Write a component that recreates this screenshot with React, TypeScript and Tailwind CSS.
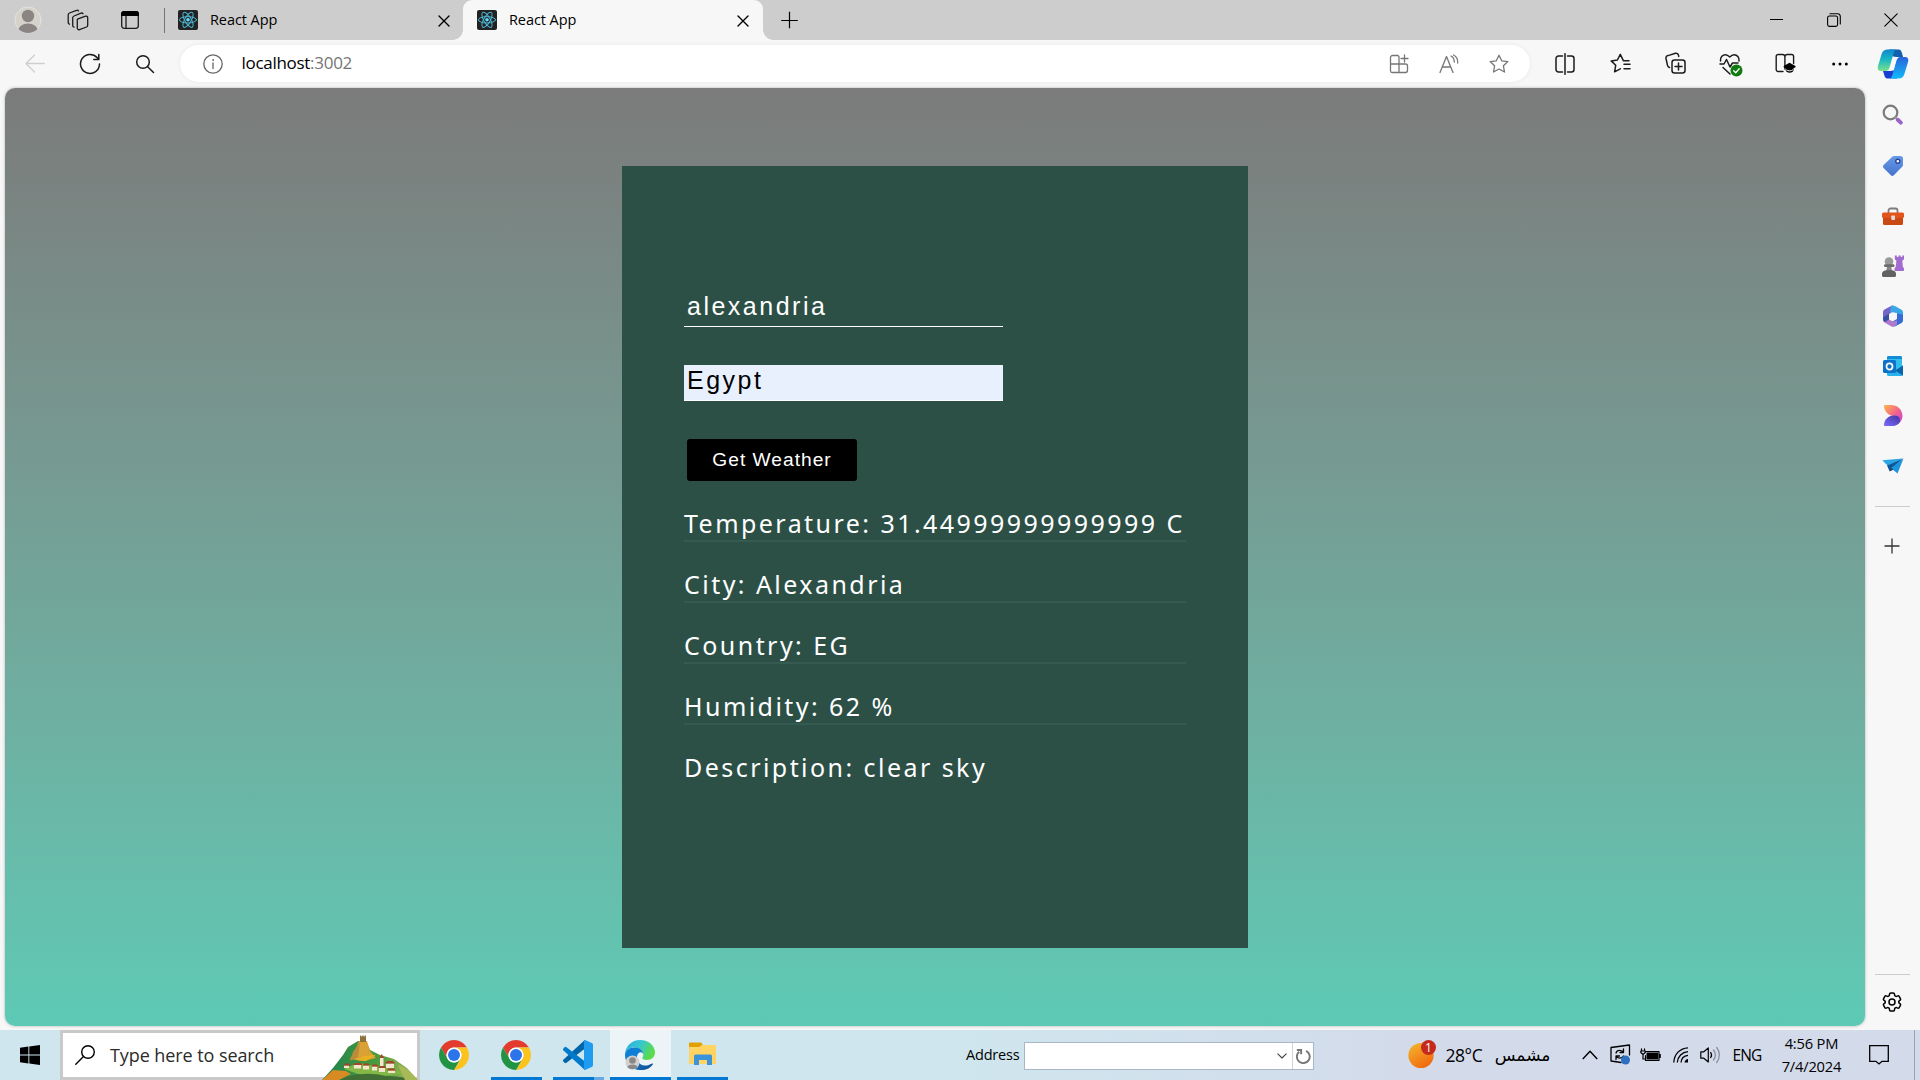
import React from "react";
import { HiOutlineCog6Tooth } from "react-icons/hi2";

type Box = { w?: number; h?: number; vb: string; className?: string; children: React.ReactNode };

function Svg({ w = 20, h = 20, vb, className = "", children }: Box) {
  return (
    <svg
      width={w}
      height={h}
      viewBox={vb}
      className={`shrink-0 ${className}`}
      fill="none"
      stroke="currentColor"
      strokeWidth={1.3}
      strokeLinecap="round"
      strokeLinejoin="round"
    >
      {children}
    </svg>
  );
}

function Slot({ className = "", children }: { className?: string; children: React.ReactNode }) {
  return <div className={`flex w-8 shrink-0 items-center justify-center ${className}`}>{children}</div>;
}

function ReactFavicon() {
  return (
    <Svg vb="0 0 20 20">
      <rect width="20" height="20" rx="2" fill="#222222" stroke="none" />
      <g stroke="#4cb5d3" strokeWidth="1">
        <ellipse cx="10" cy="9.8" rx="8.6" ry="3.2" />
        <ellipse cx="10" cy="9.8" rx="8.6" ry="3.2" transform="rotate(60 10 9.8)" />
        <ellipse cx="10" cy="9.8" rx="8.6" ry="3.2" transform="rotate(120 10 9.8)" />
      </g>
      <circle cx="10" cy="9.8" r="1.8" fill="#61dafb" stroke="none" />
    </Svg>
  );
}

function CloseGlyph() {
  return (
    <Svg w={12} h={12} vb="0 0 12 12" className="text-black">
      <path d="M1 1l10 10M11 1L1 11" strokeWidth="1.4" />
    </Svg>
  );
}

function TitleBar() {
  return (
    <div className="flex h-10 shrink-0 items-center bg-[#cdcdcd]">
      <Slot className="ml-3">
        <Svg w={28} h={28} vb="0 0 28 28">
          <defs>
            <clipPath id="avatar">
              <circle cx="14" cy="14" r="13" />
            </clipPath>
          </defs>
          <circle cx="14" cy="14" r="13" fill="#d5d1cb" stroke="#e6e3df" strokeWidth="1" />
          <g clipPath="url(#avatar)" fill="#8a8582" stroke="none">
            <circle cx="14" cy="10" r="6.2" />
            <ellipse cx="14" cy="25" rx="10" ry="7.4" />
          </g>
        </Svg>
      </Slot>
      <Slot className="ml-[18px]">
        <Svg w={22} h={22} vb="0 0 22 22" className="text-[#1b1b1b]">
          <path d="M10.500 10.200l8-3a1.600 1.600 0 0 1 2.200 1.500v7.600a1.800 1.800 0 0 1-1.200 1.700l-7 2.600a1.600 1.600 0 0 1-2.200-1.500v-7.200a1.800 1.800 0 0 1 .2-1.700z" />
          <path d="M16 4.800a1.500 1.500 0 0 0-2-.6L7 7a2 2 0 0 0-1.300 1.800v7.600a1.700 1.700 0 0 0 1.300 1.700M11.500 2a1.500 1.500 0 0 0-2-.6L2.500 4a2 2 0 0 0-1.300 1.800v7.600a1.700 1.700 0 0 0 1.300 1.700" />
        </Svg>
      </Slot>
      <Slot className="ml-5">
        <Svg w={20} h={20} vb="0 0 20 20" className="text-[#1b1b1b]">
          <rect x="1.700" y="1.700" width="16.600" height="16.600" rx="2.500" />
          <path d="M1 6V4a3 3 0 0 1 3-3h12a3 3 0 0 1 3 3v2z" fill="#000" stroke="none" />
          <path d="M6 6v12" />
        </Svg>
      </Slot>
      <div className="ml-[18px] h-[25px] w-px bg-[#757575]" />
      <div className="ml-[13px] flex h-10 w-[285px] items-center">
        <ReactFavicon />
        <span className="ml-3 text-[14.500px] leading-5 tracking-[-0.080px] text-black">React App</span>
        <div className="ml-auto mr-[13px] mt-px">
          <CloseGlyph />
        </div>
      </div>
      <div className="relative flex h-10 w-[300px] shrink-0 items-center rounded-t-[9px] bg-[#f7f7f7] pl-[14px]">
        <div className="absolute -left-[10px] bottom-0 size-[10px] bg-[radial-gradient(circle_at_top_left,transparent_9.500px,#f7f7f7_10px)]" />
        <div className="absolute -right-[10px] bottom-0 size-[10px] bg-[radial-gradient(circle_at_top_right,transparent_9.500px,#f7f7f7_10px)]" />
        <ReactFavicon />
        <span className="ml-3 text-[14.500px] leading-5 tracking-[-0.080px] text-black">React App</span>
        <div className="ml-auto mr-[14px] mt-px">
          <CloseGlyph />
        </div>
      </div>
      <Slot className="ml-[10px]">
        <Svg w={18} h={18} vb="0 0 18 18" className="text-black">
          <path d="M9.500.7v16.600M1.200 9.500h16.600" strokeWidth="1.200" strokeLinecap="butt" />
        </Svg>
      </Slot>
      <Slot className="ml-auto">
        <div className="-mt-px h-px w-[13px] bg-black" />
      </Slot>
      <Slot className="ml-[26px]">
        <Svg w={14} h={14} vb="0 0 14 14" className="text-black">
          <rect x=".600" y="3" width="10" height="10.400" rx="1.800" strokeWidth="1.100" />
          <path d="M3 .7h7.500a2.800 2.800 0 0 1 2.800 2.800V11" strokeWidth="1.100" />
        </Svg>
      </Slot>
      <Slot className="mr-[13px] ml-[25px]">
        <Svg w={14} h={14} vb="0 0 14 14" className="text-black">
          <path d="M.8.8l12.400 12.400M13.200.8L.8 13.200" strokeWidth="1.100" />
        </Svg>
      </Slot>
    </div>
  );
}

function Copilot() {
  return (
    <Svg w={32} h={30} vb="0 0 32 30">
      <defs>
        <linearGradient id="cpA" x1="0" y1="0" x2="0" y2="1">
          <stop offset="0" stopColor="#0f86cf" />
          <stop offset=".45" stopColor="#17b6c3" />
          <stop offset="1" stopColor="#7ce08c" />
        </linearGradient>
        <linearGradient id="cpB" x1="0" y1="0" x2="0" y2="1">
          <stop offset="0" stopColor="#2b63d9" />
          <stop offset="1" stopColor="#12b9fb" />
        </linearGradient>
      </defs>
      <g stroke="none">
        <path d="M12 .5h9.500c2.300 0 3 1.800 3.600 4l.9 3.500h-7L14 7z" fill="#115fae" />
        <path d="M20 29.500h-9.500c-2.300 0-2.800-1.800-3.400-4L6 22h8l4-1z" fill="#173fd0" />
        <path d="M10.500.5h9c-2 .4-2.600 2.500-3.300 5l-3.400 12c-.8 3-1.600 4.500-4.300 4.500H4c-3 0-3.800-2.200-3-5L4.600 5C5.500 2 7.500.5 10.500.5z" fill="url(#cpA)" />
        <path d="M21.500 29.500h-9c2-.4 2.600-2.500 3.300-5l3.400-12c.8-3 1.600-4.500 4.300-4.500H28c3 0 3.800 2.200 3 5l-3.600 12c-.9 3-2.900 4.500-5.900 4.500z" fill="url(#cpB)" />
        <path d="M18.300 8.500h3c-1.500 1-2 2.500-2.600 4.500l-2.200 8h-3.200c.9-1 1.300-2.500 1.800-4.500l1.200-4.500c.5-2 1-2.800 2-3.500z" fill="#f7fbff" />
      </g>
    </Svg>
  );
}

function ToolBar() {
  return (
    <div className="flex h-12 shrink-0 items-center bg-[#f7f7f7] pb-px text-[#1b1b1b]">
      <Slot className="ml-[19px] text-[#cfcfcf]">
        <Svg vb="0 0 20 20">
          <path d="M19.300 9.500H1M9.500 1L1 9.500 9.500 18" />
        </Svg>
      </Slot>
      <Slot className="ml-[23px]">
        <Svg w={22} h={22} vb="0 0 22 22">
          <path d="M20.500 11A9.500 9.500 0 1 1 18 4.500L19.800 6.500M19.800 1.500v5h-5" strokeWidth="1.500" />
        </Svg>
      </Slot>
      <Slot className="ml-[23px]">
        <Svg vb="0 0 20 20">
          <circle cx="8" cy="8" r="6.300" strokeWidth="1.500" />
          <path d="M12.700 12.700l5.800 5.800" strokeWidth="1.500" />
        </Svg>
      </Slot>
      <div className="ml-[19px] flex h-[37px] w-[1350px] shrink-0 items-center rounded-full bg-white pl-4 pr-[15px] text-[#767676] shadow-[0_0_4px_rgba(0,0,0,0.07)]">
        <Slot>
          <Svg vb="0 0 20 20" className="ml-px text-[#666666]">
            <circle cx="10" cy="10" r="9.200" />
            <path d="M10 9v5.500" />
            <circle cx="10" cy="6" r=".5" fill="currentColor" strokeWidth=".8" />
          </Svg>
        </Slot>
        <span className="-mt-px ml-[13.500px] text-[17px] leading-6 tracking-[-0.290px]">
          <span className="text-black">localhost</span>:3002
        </span>
        <Slot className="ml-auto">
          <Svg vb="0 0 20 20">
            <path d="M9 1.500H3.500a2 2 0 0 0-2 2V17a1.500 1.500 0 0 0 1.500 1.500h13.500a2 2 0 0 0 2-2V12a2 2 0 0 0-2-2h-15M10 18.500V3a1.500 1.500 0 0 0-1.500-1.500M15.500 1v7M12 4.500h7" />
          </Svg>
        </Slot>
        <Slot className="ml-[18px]">
          <Svg vb="0 0 20 20">
            <path d="M1 18.500L7.500 2.500 14 18.500M3.300 13h8.400M12 2c2 1 3.300 3 3.300 6M14.500 1c2.800 1.500 4.500 4.500 4.200 8" />
          </Svg>
        </Slot>
        <Slot className="ml-[18px]">
          <Svg vb="0 0 20 20">
            <path d="M10 1.200l2.700 5.600 6.200.8-4.500 4.200 1.100 6.200L10 15l-5.500 3 1.100-6.200L1.100 7.600l6.200-.8z" />
          </Svg>
        </Slot>
      </div>
      <Slot className="ml-[19px]">
        <Svg w={20} h={22} vb="0 0 20 22">
          <path d="M7.500 3H3.500a2.500 2.500 0 0 0-2.500 2.500v11A2.500 2.500 0 0 0 3.500 19h4M12.500 3h4A2.500 2.500 0 0 1 19 5.500v11a2.500 2.500 0 0 1-2.500 2.500h-4M10 .7v20.600" strokeWidth="1.500" />
        </Svg>
      </Slot>
      <Slot className="ml-[23px]">
        <Svg w={21} h={21} vb="0 0 21 21">
          <path d="M19 7.800h-5.500L10.300 1.300 7.400 7l-6.200.9 4.500 4.400-1.100 6.500 5.700-3M14 11.300h6M14 15.800h6" strokeWidth="1.500" />
        </Svg>
      </Slot>
      <Slot className="ml-[23px]">
        <Svg w={21} h={22} vb="0 0 21 22" className="-mt-px">
          <rect x="7" y="8" width="13" height="13" rx="2.500" strokeWidth="1.500" />
          <path d="M13.500 11v7M10 14.500h7M4.500 15.500a3 3 0 0 1-2-2.200L1 6.500A2.500 2.500 0 0 1 3 3.600l7.500-2.300a2.500 2.500 0 0 1 3 1.900l.2 1.300" strokeWidth="1.500" />
        </Svg>
      </Slot>
      <Slot className="ml-6">
        <Svg w={24} h={24} vb="0 0 24 24" className="mt-[3px]">
          <path d="M1.500 8c-.5-4 2.500-6.300 5-6.300 2 0 3 1 4.300 2.300 1.200-1.300 2.300-2.300 4.300-2.300 3 0 5.400 2.800 4.900 6.300M1 11h4l2.500-4.500L11 14l2.500-4H19M4 14.500l7 6.500" strokeWidth="1.500" />
          <circle cx="17.500" cy="17.500" r="6" fill="#0f7b10" stroke="none" />
          <path d="M14.700 17.700l2 2 3.500-4" stroke="#fff" />
        </Svg>
      </Slot>
      <Slot className="ml-[22px]">
        <Svg w={21} h={21} vb="0 0 21 21">
          <path d="M8 18.500H3.200a2 2 0 0 1-2-2v-13a2 2 0 0 1 2-2h4.500a2.200 2.200 0 0 1 2.200 2.200V16M9.900 3.700a2.200 2.200 0 0 1 2.200-2.200h4.500a2 2 0 0 1 2 2v7" strokeWidth="1.400" />
          <path d="M14.500 9.700l6 3.400v1.200l-2 1v2.200c-1 3-6.500 3-7.800 0v-2.200l-2-1v-1.200z" fill="#000" stroke="none" />
          <path d="M11.500 17c1.800 1.200 4.500 1.200 6.200 0" stroke="#f7f7f7" strokeWidth="1" />
        </Svg>
      </Slot>
      <Slot className="ml-[23px]">
        <Svg w={16} h={4} vb="0 0 16 4">
          <g fill="#000" stroke="none">
            <circle cx="1.700" cy="2" r="1.500" />
            <circle cx="8" cy="2" r="1.500" />
            <circle cx="14.300" cy="2" r="1.500" />
          </g>
        </Svg>
      </Slot>
      <Slot className="ml-[21px]">
        <Copilot />
      </Slot>
    </div>
  );
}

function WeatherPage() {
  return (
    <main className="ml-[5px] flex h-[938px] w-[1860px] shrink-0 items-start justify-center overflow-hidden rounded-[10px] bg-gradient-to-b from-[#7b7b7b] to-[#5dcab5] pt-[78px] shadow-[0_0_3px_rgba(0,0,0,0.3)]">
      <section className="flex h-[782px] w-[626px] flex-col items-start bg-[#2c5046] px-[62px] pt-[125px] text-[25px] tracking-[0.1em] text-white">
        <input
          defaultValue="alexandria"
          className="block h-9 w-[319px] border-b border-white bg-transparent px-[3px] pb-[5px] pt-px font-['Liberation_Sans',sans-serif] leading-[29px] tracking-[0.1em] outline-none"
        />
        <input
          defaultValue="Egypt"
          className="mt-[38px] block h-9 w-[319px] border-b border-white bg-[#e8f0fe] px-[3px] pb-[5px] pt-px font-['Liberation_Sans',sans-serif] leading-[29px] tracking-[0.1em] text-black outline-none"
        />
        <button className="ml-[3px] mt-[38px] h-[42px] w-[170px] rounded-[3px] bg-black text-center font-['Liberation_Sans',sans-serif] text-[19.200px] leading-[22px] tracking-[1px] whitespace-nowrap">
          Get Weather
        </button>
        <div className="mt-[25px] flex w-full flex-col gap-[25px] font-['Noto_Sans',sans-serif] leading-[34px] tracking-[2.450px] whitespace-nowrap">
          <p className="border-b-2 border-[#355b50]">Temperature: 31.44999999999999 C</p>
          <p className="border-b-2 border-[#355b50]">City: Alexandria</p>
          <p className="border-b-2 border-[#355b50]">Country: EG</p>
          <p className="border-b-2 border-[#355b50]">Humidity: 62 %</p>
          <p>Description: clear sky</p>
        </div>
      </section>
    </main>
  );
}

function SideBar() {
  return (
    <aside className="flex w-[55px] shrink-0 flex-col items-center">
      <div className="flex flex-col items-center pt-px">
        <div className="flex h-[51px] items-center justify-center">
          <Svg w={22} h={22} vb="0 0 22 22">
            <circle cx="8.500" cy="8.500" r="6.800" stroke="#7b7b7b" strokeWidth="2.200" />
            <path d="M13.500 13.500l2 2" stroke="#999" strokeWidth="2" />
            <path d="M15.800 15.800l3 2.800" stroke="#9b62c9" strokeWidth="4" />
          </Svg>
        </div>
        <div className="flex h-[51px] items-center justify-center">
          <Svg w={22} h={22} vb="0 0 22 22">
            <defs>
              <linearGradient id="tag" x1="0" y1="0" x2="0" y2="1">
                <stop offset="0" stopColor="#669be8" />
                <stop offset="1" stopColor="#4672cd" />
              </linearGradient>
            </defs>
            <path d="M12 1h6.500A2.500 2.500 0 0 1 21 3.500V10a2 2 0 0 1-.6 1.500l-8.600 8.700a2 2 0 0 1-2.900 0L1.600 13a2 2 0 0 1 0-2.900l8.900-8.500A2 2 0 0 1 12 1z" fill="url(#tag)" stroke="none" />
            <circle cx="15.800" cy="6.300" r="2" fill="#fff" stroke="#28449b" strokeWidth="1.400" />
          </Svg>
        </div>
        <div className="flex h-[51px] items-center justify-center">
          <Svg w={22} h={20} vb="0 0 22 20">
            <path d="M6.500 6V3.500a2 2 0 0 1 2-2h5a2 2 0 0 1 2 2V6" stroke="#7c7c7c" strokeWidth="1.800" />
            <rect x="1" y="9" width="20" height="9" rx="1.500" fill="#c94813" stroke="none" />
            <rect x="0" y="5.500" width="22" height="5.500" rx="1.500" fill="#e2541c" stroke="none" />
            <rect x="9.300" y="8.500" width="3.700" height="4.500" rx=".8" fill="#ddd" stroke="none" />
          </Svg>
        </div>
        <div className="flex h-[49px] items-center justify-center">
          <Svg w={22} h={22} vb="0 0 22 22" className="-mt-px">
            <g stroke="none">
              <circle cx="7" cy="6.500" r="4.300" fill="#9a9a9a" />
              <rect x="2" y="9.300" width="10.500" height="2.700" rx="1.300" fill="#6c6c6c" />
              <path d="M5 12h4.300l.7 4H4.300z" fill="#858585" />
              <path d="M0 20.500v-2c0-1.500 1.500-3 4-3.300h6.300c2.200.3 3.700 1.800 3.700 3.300v2c0 .9-.6 1.500-1.500 1.500h-11C.6 22 0 21.400 0 20.500z" fill="#626262" />
              <path d="M12.800.5h2V2h1.700V.5h2.200V2h1.500V.5H22v3.700l-1.700 1.600.5 5.700 1.200 2V15c0 .6-.4 1-1 1h-7.500c-.6 0-1-.4-1-1v-1.500l1.300-2 .6-5.700-1.600-1.600z" fill="#a16bd0" />
            </g>
          </Svg>
        </div>
        <div className="flex h-[50px] items-center justify-center">
          <Svg w={20} h={22} vb="0 0 20 22">
            <g stroke="none">
              <path d="M9.500.3L1.500 4.500A3 3 0 0 0 0 7v9l6-1.500V9l6-3z" fill="#7665c8" />
              <path d="M8 1a4 4 0 0 1 4 0l6.500 3.800A3 3 0 0 1 20 7.300V13l-6-2V8L7 7.500 8 2z" fill="#39a6e8" />
              <path d="M20 9.500v6a3 3 0 0 1-1.500 2.500L12 21.500 8.500 17l5.500-3V8.500z" fill="#356bd3" />
              <path d="M0 13.500l6-2.500v3.500l4 2 4-1v3.800L11.500 21.500a3 3 0 0 1-3 0L1.500 17.500A3 3 0 0 1 0 15z" fill="#b179ce" />
              <path d="M0 12.500l6-4v6L2 17c-1.200-.5-2-2-2-4.500z" fill="#3551a2" />
              <path d="M8.300 7.500h3.400L14 11l-2.300 3.500H8.300L6 11z" fill="#f7f7f7" />
            </g>
          </Svg>
        </div>
        <div className="flex h-[50px] items-center justify-center">
          <Svg w={20} h={20} vb="0 0 20 20">
            <g stroke="none">
              <rect x="4" width="15" height="18" rx="1.500" fill="#32bdef" />
              <path d="M4 3V1.500A1.500 1.500 0 0 1 5.500 0h12A1.500 1.500 0 0 1 19 1.500V3z" fill="#138bd5" />
              <path d="M20 9v9.500a1.500 1.500 0 0 1-1.500 1.500h-13A1.500 1.500 0 0 1 4 18.500V15h10z" fill="#29b1ec" />
              <path d="M20 9.500v10L12 14.500z" fill="#0a64aa" />
              <rect y="4" width="13" height="13" rx="1.500" fill="#0c72c9" />
            </g>
            <ellipse cx="6.500" cy="10.500" rx="3" ry="3.200" stroke="#fff" strokeWidth="1.700" />
          </Svg>
        </div>
        <div className="flex h-[50px] items-center justify-center">
          <Svg w={20} h={21} vb="0 0 20 21" className="-mt-px">
            <defs>
              <linearGradient id="dsA" x1="0" y1="0" x2="1" y2="1">
                <stop offset="0" stopColor="#ffb64b" />
                <stop offset=".5" stopColor="#f26489" />
                <stop offset="1" stopColor="#bc38f0" />
              </linearGradient>
              <linearGradient id="dsB" x1="1" y1="0" x2="0" y2="1">
                <stop offset="0" stopColor="#41359e" />
                <stop offset="1" stopColor="#7a6cff" />
              </linearGradient>
            </defs>
            <g stroke="none">
              <path d="M1 1c0-.6.400-1 1-1h6c6 0 11 4 11.500 10.500C19.500 17 14 21 8 21l3-10C5 10.500 1 6 1 1z" fill="url(#dsA)" />
              <path d="M1 20c0-5 4-9.500 10-9.500 4 0 6 1.500 6 4.500 0 4-4 6-9 6H2c-.6 0-1-.4-1-1z" fill="url(#dsB)" />
            </g>
          </Svg>
        </div>
        <div className="flex h-[50px] items-center justify-center">
          <Svg w={22} h={16} vb="0 0 22 16">
            <g stroke="none">
              <path d="M.3 2.300L21 .5 5.500 7.500z" fill="#2aa5e7" />
              <path d="M5 7.500L21 .5 7.500 13z" fill="#0b5798" />
              <path d="M21.500.5L15.500 15.500 9 10z" fill="#1c95dd" />
              <path d="M9 10l2.500 1.700L7.200 13.500z" fill="#1e3b66" />
            </g>
          </Svg>
        </div>
      </div>
      <div className="mt-[15px] h-px w-[35px] bg-[#cccccc]" />
      <Svg w={16} h={16} vb="0 0 16 16" className="mr-px mt-[31px] text-[#333333]">
        <path d="M8 .5v15M.5 8h15" strokeLinecap="butt" />
      </Svg>
      <div className="mt-auto h-px w-[35px] bg-[#cccccc]" />
      <HiOutlineCog6Tooth className="mb-[16px] mr-px mt-[15px] size-6 text-black" />
    </aside>
  );
}

function Chrome() {
  return (
    <Svg w={30} h={30} vb="0 0 30 30">
      <g stroke="none">
        <path d="M2.010 7.500A15 15 0 0 1 27.990 7.500H15a7.500 7.500 0 0 0-6.500 11.250z" fill="#e33b2e" />
        <path d="M27.990 7.500A15 15 0 0 1 15 30l6.500-11.250A7.500 7.500 0 0 0 15 7.500z" fill="#fcc31e" />
        <path d="M15 30A15 15 0 0 1 2.010 7.500L8.500 18.750a7.500 7.500 0 0 0 13 0z" fill="#229342" />
        <circle cx="15" cy="15" r="7.500" fill="#fff" />
        <circle cx="15" cy="15" r="6" fill="#2b74ea" />
      </g>
    </Svg>
  );
}

function SearchHighlight() {
  return (
    <Svg w={96} h={45} vb="0 0 96 45">
      <defs>
        <linearGradient id="hill" x1="0" y1="0" x2="1" y2="0">
          <stop offset="0" stopColor="#1c8050" />
          <stop offset=".6" stopColor="#4d9c3c" />
          <stop offset="1" stopColor="#b6bd62" />
        </linearGradient>
      </defs>
      <g stroke="none">
        <path d="M0 45l11-12 10-13 5-8 10-6h8l4 9 10 5 14 4 13 9 11 12z" fill="url(#hill)" />
        <path d="M37 6h8l3 10 6 7-12 3-14-2 5-8z" fill="#d9a034" />
        <path d="M38 7l-2 15-8 4 3-9z" fill="#b98c3a" />
        <path d="M33 25l9-4 12-1-10 6z" fill="#e9b122" />
        <path d="M38 .5h1.200v1h1V.5h1.500v1h1V.5H44v6.500h-6z" fill="#8f6f3c" />
        <path d="M22 34q14-8 26-4l22 4 12 4-20 3-26-2z" fill="#82b845" />
        <path d="M0 45l11-10 13 1 5 3-12 6z" fill="#d78b22" />
        <path d="M24 42q20-6 40-1 14 0 31 4H18z" fill="#416e34" />
        <path d="M76 30q8 2 20 15H83z" fill="#a8b957" />
        <path
          d="M22 30.500h5v2.500h-5zM32 30h7v3.500h-7zM41 30.500h6v4h-6zM50 31.500h5v4h-5zM58 23h3.500v9H58zM64 28.500h8V33h-8zM57 33h6v4h-6zM66 35.500h7V38h-7z"
          fill="#f4e6cf"
        />
        <path
          d="M21 30.500l2-2h4.500l1 2zM31 30l2-2h6l1.500 2zM40.500 30.500l1.500-2h4.500l1.500 2zM49.500 31.500l1-2h4.500l1.500 2zM57.500 23l2.200-4 2.300 4zM63 28.500l2-2.500h6l2 2.500zM56 33l2-2h5l1 2zM65 35.500l1-2h6l2 2z"
          fill="#a5432b"
        />
      </g>
    </Svg>
  );
}

function TaskBar() {
  return (
    <footer className="flex h-[50px] w-full shrink-0 items-center bg-gradient-to-r from-[#cfe6ee] from-50% to-[#d3daea] to-75% text-black">
      <div className="flex w-[60px] shrink-0 justify-center">
        <Svg w={20} h={20} vb="0 0 20 20">
          <path d="M0 2.700L8.400 1.500v8H0zM9.300 1.400L20 0v9.500H9.300zM0 10.400h8.400v8.100L0 17.300zM9.300 10.400H20V20L9.300 18.600z" fill="#000" stroke="none" />
        </Svg>
      </div>
      <div className="flex h-[50px] w-[360px] shrink-0 items-center border-[3px] border-[#c9c9c9] bg-white pl-[12px]">
        <Svg vb="0 0 20 20">
          <circle cx="13" cy="7" r="6.300" strokeWidth="1.400" />
          <path d="M8.500 11.500L.8 19.200" strokeWidth="1.400" />
        </Svg>
        <span className="-mt-px ml-[15px] text-[18px] leading-6 tracking-[-0.080px] text-[#2b2b2b]">Type here to search</span>
        <div className="-mr-px -mb-[3px] ml-auto self-end">
          <SearchHighlight />
        </div>
      </div>
      <div className="ml-[19px] flex h-[50px] items-center">
        <Chrome />
      </div>
      <div className="ml-[22px] flex h-[50px] w-[51px] items-center justify-center border-b-[3px] border-[#0078d4] pt-[3px] pr-px">
        <Chrome />
      </div>
      <div className="ml-[11px] flex h-[50px] w-[51px] flex-col items-center">
        <div className="flex h-[47px] items-center pt-[3px] pr-px">
          <Svg w={30} h={30} vb="0 0 30 30">
            <g stroke="none">
              <path d="M22 8.500L3.500 22.700a1.500 1.500 0 0 1-2 0L.5 21.500a1.300 1.300 0 0 1 0-2L21 .8 22 0z" fill="#0065a9" />
              <path d="M22 21.500L3.500 7.300a1.500 1.500 0 0 0-2 0L.5 8.500a1.300 1.300 0 0 0 0 2L21 29.200 22 30z" fill="#007acc" />
              <path d="M22 0l6.800 3A2 2 0 0 1 30 4.800v20.400a2 2 0 0 1-1.200 1.800L22 30c-.8 0-1-.3-1-1V1c0-.7.200-1 1-1z" fill="#1f9cf0" />
            </g>
          </Svg>
        </div>
        <div className="flex h-[3px] w-full">
          <div className="w-[41px] bg-[#0078d4]" />
          <div className="w-[10px] bg-[#66a9e4]" />
        </div>
      </div>
      <div className="ml-[6px] flex h-[50px] w-[61px] items-center justify-center border-b-[3px] border-[#0078d4] bg-[#ecf4f8] pt-[3px] pr-px">
        <Svg w={30} h={30} vb="0 0 30 30">
          <defs>
            <linearGradient id="edA" x1="0" y1="0" x2="1" y2=".4">
              <stop offset="0" stopColor="#2cacdc" />
              <stop offset=".5" stopColor="#35c6d4" />
              <stop offset="1" stopColor="#5bdc49" />
            </linearGradient>
            <linearGradient id="edB" x1="0" y1="0" x2="1" y2="1">
              <stop offset="0" stopColor="#1583d8" />
              <stop offset="1" stopColor="#114a8b" />
            </linearGradient>
          </defs>
          <g stroke="none">
            <path d="M0 14C.5 6 7 0 15 0c9 0 15 6 15 12.500 0 4.500-3.500 7.500-8 7.500-3 0-4.700-.8-4.700-1.700 0-.8 1-1.500 1-3.500C18.300 11 14 7.500 9 7.500c-4.500 0-8 2.500-9 6.500z" fill="url(#edA)" />
            <path d="M0 15c0-4 4-7.500 9.500-7.500 5.500 0 8.800 3.500 8.800 7 0-1.800-2-3-3.800-2-2 1.200-2.700 3-2.700 5C11.800 24 18 27 24 26c-2 2.500-5.500 4-9 4C6 30 0 23 0 15z" fill="#0f7fd5" />
            <path d="M12.500 14.500C10 20.500 15 26.500 22 25.500c2.500-.4 4.500-2 5.500-2 .7 0 .6.500.1 1.200C25 28.500 20 30.500 14.500 30 8.500 27.500 8 19 12.500 14.500z" fill="url(#edB)" />
            <circle cx="7.500" cy="22.500" r="7" fill="#d2d0ce" />
            <circle cx="7.500" cy="20.500" r="3.300" fill="#8a8886" />
            <path d="M2.300 27c1-3.500 9.400-3.500 10.400 0-2.500 3-7.900 3-10.400 0z" fill="#8a8886" />
          </g>
        </Svg>
      </div>
      <div className="ml-[6px] flex h-[50px] w-[51px] items-center justify-center border-b-[3px] border-[#0078d4] pt-[3px]">
        <Svg w={28} h={24} vb="0 0 28 24" className="-mt-[2px]">
          <g stroke="none">
            <path d="M0 1.500A1 1 0 0 1 1 .5h11l2 2.500-2 3H0z" fill="#dfa000" />
            <path d="M0 5h10l3-2h13a1 1 0 0 1 1 1v18H0z" fill="#ffd462" />
            <path d="M5 23v-9a1.500 1.500 0 0 1 1.500-1.500h15A1.500 1.500 0 0 1 23 14v9h-5v-5h-8v5z" fill="#3b94d9" />
          </g>
        </Svg>
      </div>

      <span className="ml-[238px] text-[14.500px] leading-5 tracking-[-0.200px]">Address</span>
      <div className="ml-[5px] mt-[2px] flex h-7 w-[290px] shrink-0 items-center border border-[#a9b6c5] bg-white">
        <Svg w={10} h={6} vb="0 0 10 6" className="ml-auto text-[#444444]">
          <path d="M.8.800L5 5 9.200.8" strokeWidth="1.100" />
        </Svg>
        <div className="ml-[5px] flex h-full w-[21px] items-center justify-center border-l border-[#d0d5db] pt-px text-[#777777]">
          <Svg w={15} h={15} vb="0 0 14 14">
            <path d="M9.500 1.800A6 6 0 1 1 3 2.500M.8 1h4v4" strokeWidth="1.800" strokeLinecap="butt" strokeLinejoin="miter" />
          </Svg>
        </div>
      </div>

      <div className="ml-[94px] flex shrink-0 items-center">
        <Svg w={28} h={30} vb="0 0 28 30">
          <defs>
            <linearGradient id="sun" x1="0" y1="0" x2=".6" y2="1">
              <stop offset="0" stopColor="#f3ba2d" />
              <stop offset="1" stopColor="#f26a10" />
            </linearGradient>
          </defs>
          <circle cx="13" cy="15.500" r="12.600" fill="url(#sun)" stroke="none" />
          <circle cx="20.500" cy="7.500" r="7.500" fill="#c42b1c" stroke="none" />
          <text x="20.500" y="11.800" fontSize="12" textAnchor="middle" fill="#fff" stroke="none">
            1
          </text>
        </Svg>
      </div>
      <span className="ml-[9px] w-[38px] text-[17.500px] leading-6 tracking-[-0.400px] whitespace-nowrap">28°C</span>
      <span dir="rtl" className="ml-[11px] w-[56px] font-['DejaVu_Sans',sans-serif] text-[17px] leading-6 whitespace-nowrap">
        مشمس
      </span>
      <Svg w={16} h={10} vb="0 0 16 10" className="ml-[32px]">
        <path d="M.8 9L8 1.300 15.200 9" strokeWidth="1.400" strokeLinecap="butt" />
      </Svg>
      <Svg w={21} h={21} vb="0 0 21 21" className="-mt-px ml-[12px]">
        <path d="M11 18.500L1 17V3.500L19.500 1v10" />
        <path d="M6 9c1-3.500 6-3.500 7.500-.5M13.500 5v3.500H10M13.500 12c-2 3-6 2.500-7.500 0M6 15.500V12h3.500" />
        <circle cx="15.500" cy="16" r="4.500" fill="#2a70bf" stroke="none" />
      </Svg>
      <Svg w={21} h={14} vb="0 0 21 14" className="ml-[9px]">
        <path d="M5.500 3.500H19v9H5.500v-5" strokeWidth="1.200" />
        <rect x="6.500" y="4.500" width="11.700" height="7" fill="#000" stroke="none" />
        <rect x="19" y="6" width="1.800" height="4" fill="#000" stroke="none" />
        <path d="M1.500.8v2M4.500.8v2M.8 3h4.500v1.500L3 6.500.8 4.500zM3 6.500V11h2" strokeWidth="1.200" />
      </Svg>
      <Svg w={16} h={16} vb="0 0 16 16" className="ml-[12px]">
        <path d="M.8 15.500C1.200 7 7 1.200 15 .8M4.300 15.500C4.700 9.500 9 5 15 4.600M8 15.500c.3-4 3-6.800 7-7.200" strokeWidth="1.300" strokeLinecap="butt" />
        <path d="M11.500 15.500c.2-2 1.500-3.400 3.500-3.600v3.600z" fill="#000" stroke="none" />
      </Svg>
      <Svg w={21} h={18} vb="0 0 21 18" className="ml-[11px]">
        <path d="M.8 5.800h3L8.300 2v14l-4.500-3.800h-3z" strokeWidth="1.200" />
        <path d="M10.700 6.500c1 1.500 1 3.500 0 5" />
        <path d="M13.500 4c2.300 3 2.300 7 0 10M16.700 1.500c3.500 4.500 3.500 10.500 0 15" stroke="#8b919b" />
      </Svg>
      <span className="ml-[11px] w-[30px] text-[15.500px] leading-5 tracking-[-0.800px] whitespace-nowrap">ENG</span>
      <div className="ml-[15px] flex w-[68px] flex-col items-center text-[14.700px] leading-[23px] tracking-[-0.200px] whitespace-nowrap">
        <span>4:56 PM</span>
        <span>7/4/2024</span>
      </div>
      <Svg w={20} h={20} vb="0 0 20 20" className="ml-[24px]">
        <path d="M.7.700h18.600v15.600H13L10 19l-3-2.700H.7z" strokeWidth="1.300" strokeLinejoin="miter" />
      </Svg>
      <div className="ml-auto mr-[5px] h-full w-px bg-[#9aa3b4]" />
    </footer>
  );
}

export default function App() {
  return (
    <div className="flex h-[1080px] w-[1920px] flex-col overflow-hidden bg-[#f7f7f7] font-['Open_Sans','Noto_Sans',sans-serif]">
      <TitleBar />
      <ToolBar />
      <div className="flex h-[942px] shrink-0">
        <WeatherPage />
        <SideBar />
      </div>
      <TaskBar />
    </div>
  );
}
